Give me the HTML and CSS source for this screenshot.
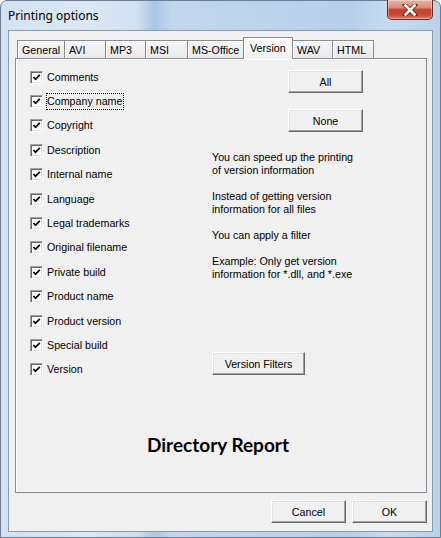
FILE: index.html
```html
<!DOCTYPE html>
<html>
<head>
<meta charset="utf-8">
<link rel="stylesheet" href="styles.css">
</head>
<body>
<div class="window">
  <div class="titlebar">
    <span class="title">Printing options</span>
    <span class="close">
      <svg width="16" height="12" viewBox="0 0 16 12">
        <path d="M3 1 L13 11 M13 1 L3 11" stroke="#5a2018" stroke-width="4.2" stroke-linecap="square"/>
        <path d="M3.5 1.5 L12.5 10.5 M12.5 1.5 L3.5 10.5" stroke="#ffffff" stroke-width="2.6" stroke-linecap="square"/>
      </svg>
    </span>
  </div>
  <div class="client">
    <div class="tabs">
      <span class="tab" style="width:48px">General</span>
      <span class="tab" style="width:42px">AVI</span>
      <span class="tab" style="width:41px">MP3</span>
      <span class="tab" style="width:43px">MSI</span>
      <span class="tab" style="width:57px">MS-Office</span>
      <span class="tab active" style="width:50px">Version</span>
      <span class="tab" style="width:41px">WAV</span>
      <span class="tab" style="width:42px">HTML</span>
    </div>
    <div class="panel">
      <div class="columns">
        <div class="checks">
          <div class="row"><span class="cb"><svg viewBox="0 0 11 11"><path d="M2.5 5 L4.5 7.3 L8.8 2.8" /></svg></span><span class="lbl">Comments</span></div>
          <div class="row"><span class="cb"><svg viewBox="0 0 11 11"><path d="M2.5 5 L4.5 7.3 L8.8 2.8" /></svg></span><span class="lbl focus">Company name</span></div>
          <div class="row"><span class="cb"><svg viewBox="0 0 11 11"><path d="M2.5 5 L4.5 7.3 L8.8 2.8" /></svg></span><span class="lbl">Copyright</span></div>
          <div class="row"><span class="cb"><svg viewBox="0 0 11 11"><path d="M2.5 5 L4.5 7.3 L8.8 2.8" /></svg></span><span class="lbl">Description</span></div>
          <div class="row"><span class="cb"><svg viewBox="0 0 11 11"><path d="M2.5 5 L4.5 7.3 L8.8 2.8" /></svg></span><span class="lbl">Internal name</span></div>
          <div class="row"><span class="cb"><svg viewBox="0 0 11 11"><path d="M2.5 5 L4.5 7.3 L8.8 2.8" /></svg></span><span class="lbl">Language</span></div>
          <div class="row"><span class="cb"><svg viewBox="0 0 11 11"><path d="M2.5 5 L4.5 7.3 L8.8 2.8" /></svg></span><span class="lbl">Legal trademarks</span></div>
          <div class="row"><span class="cb"><svg viewBox="0 0 11 11"><path d="M2.5 5 L4.5 7.3 L8.8 2.8" /></svg></span><span class="lbl">Original filename</span></div>
          <div class="row"><span class="cb"><svg viewBox="0 0 11 11"><path d="M2.5 5 L4.5 7.3 L8.8 2.8" /></svg></span><span class="lbl">Private build</span></div>
          <div class="row"><span class="cb"><svg viewBox="0 0 11 11"><path d="M2.5 5 L4.5 7.3 L8.8 2.8" /></svg></span><span class="lbl">Product name</span></div>
          <div class="row"><span class="cb"><svg viewBox="0 0 11 11"><path d="M2.5 5 L4.5 7.3 L8.8 2.8" /></svg></span><span class="lbl">Product version</span></div>
          <div class="row"><span class="cb"><svg viewBox="0 0 11 11"><path d="M2.5 5 L4.5 7.3 L8.8 2.8" /></svg></span><span class="lbl">Special build</span></div>
          <div class="row"><span class="cb"><svg viewBox="0 0 11 11"><path d="M2.5 5 L4.5 7.3 L8.8 2.8" /></svg></span><span class="lbl">Version</span></div>
        </div>
        <div class="side">
          <button class="btn btn-all">All</button>
          <button class="btn btn-none">None</button>
          <div class="info">
            <p>You can speed up the printing<br>of version information</p>
            <p>Instead of getting version<br>information for all files</p>
            <p>You can apply a filter</p>
            <p>Example: Only get version<br>information for *.dll, and *.exe</p>
          </div>
          <button class="btn btn-filters">Version Filters</button>
        </div>
      </div>
      <div class="report">Directory Report</div>
    </div>
    <div class="footer">
      <button class="btn btn-foot">Cancel</button>
      <button class="btn btn-foot">OK</button>
    </div>
  </div>
</div>
</body>
</html>
```
FILE: styles.css
```css
html, body {
  margin: 0;
  padding: 0;
  width: 441px;
  height: 538px;
  overflow: hidden;
  background: #ffffff;
}
.window {
  box-sizing: border-box;
  width: 441px;
  height: 538px;
  border: 1px solid #6c7d91;
  border-radius: 7px 7px 0 0;
  background: linear-gradient(to right, #d3e2f2 0%, #dbe8f5 20%, #cfe0f1 31%, #a9c6e6 35%, #c2d7ee 39%, #bcd3ec 60%, #b6cfea 80%, #c7dbef 88%, #b9d1ea 100%);
  display: flex;
  flex-direction: column;
  font-family: "Liberation Sans", Arial, sans-serif;
}
.titlebar {
  height: 29px;
  display: flex;
  justify-content: space-between;
  align-items: flex-start;
  padding: 0 7px 0 7px;
}
.title {
  font-family: "Noto Sans", "Liberation Sans", sans-serif;
  font-size: 12px;
  color: #000;
  margin-top: 6px;
}
.close {
  box-sizing: border-box;
  width: 46px;
  height: 20px;
  margin-top: -1px;
  border: 1px solid #6b2a22;
  border-top: none;
  border-radius: 0 0 5px 5px;
  background: linear-gradient(#eab2a4 0%, #dc8a7a 40%, #c74532 50%, #c9442f 75%, #de7d63 100%);
  box-shadow: inset 0 0 0 1px rgba(255,255,255,0.35);
  display: flex;
  align-items: center;
  justify-content: center;
}
.close svg { display: block; }
.client {
  box-sizing: border-box;
  margin: 0 7px 0 7px;
  height: 502px;
  border: 1px solid #8a9bb0;
  background: #f0f0f0;
  display: flex;
  flex-direction: column;
  padding: 6px 5px 0 6px;
}
.tabs {
  display: flex;
  align-items: flex-end;
  height: 21px;
  padding-left: 2px;
  position: relative;
  z-index: 2;
}
.tab {
  box-sizing: border-box;
  height: 18px;
  border: 1px solid #898c95;
  border-bottom: none;
  margin-left: -1px;
  background: linear-gradient(#f6f6f6, #e9e9e9);
  box-shadow: inset 1px 1px 0 #ffffff;
  font-size: 10.7px;
  color: #000;
  padding: 3px 0 0 4px;
  white-space: nowrap;
  overflow: hidden;
}
.tab:first-child { margin-left: 0; }
.tab.active {
  height: 22px;
  margin-bottom: -1px;
  background: linear-gradient(#fdfdfd, #f0f0f0);
  padding-top: 4px;
  padding-left: 6px;
  position: relative;
  z-index: 3;
}
.panel {
  box-sizing: border-box;
  height: 435px;
  border: 1px solid #898c95;
  box-shadow: inset 1px 1px 0 #ffffff;
  background: #f0f0f0;
  display: flex;
  flex-direction: column;
  padding: 6px 0 0 14px;
}
.columns {
  display: flex;
}
.checks {
  width: 182px;
  display: flex;
  flex-direction: column;
}
.row {
  height: 24.4px;
  display: flex;
  align-items: center;
}
.cb {
  box-sizing: border-box;
  width: 13px;
  height: 13px;
  background: #fff;
  border: 1px solid;
  border-color: #a0a0a0 #ffffff #ffffff #a0a0a0;
  box-shadow: inset 1px 1px 0 #696969, inset -1px -1px 0 #e3e3e3;
  display: flex;
  align-items: center;
  justify-content: center;
  margin-right: 3px;
}
.cb svg {
  width: 11px;
  height: 11px;
  display: block;
}
.cb path {
  fill: none;
  stroke: #000;
  stroke-width: 1.7;
}
.lbl {
  font-size: 10.7px;
  color: #000;
  padding: 1px 1px 2px 0;
  border: 1px dotted transparent;
  line-height: 12px;
}
.lbl.focus {
  border-color: #000;
}
.side {
  display: flex;
  flex-direction: column;
  align-items: flex-start;
  padding-top: 5px;
}
.btn {
  box-sizing: border-box;
  font-family: "Liberation Sans", Arial, sans-serif;
  font-size: 10.7px;
  color: #000;
  background: #f0f0f0;
  border: 1px solid;
  border-color: #ffffff #696969 #696969 #ffffff;
  box-shadow: inset -1px -1px 0 #a0a0a0, inset 1px 1px 0 #e3e3e3;
  padding: 0;
  margin: 0;
  display: flex;
  align-items: center;
  justify-content: center;
}
.btn-all {
  width: 75px;
  height: 23px;
  margin-left: 76px;
}
.btn-none {
  width: 75px;
  height: 23px;
  margin-left: 76px;
  margin-top: 16px;
}
.info {
  margin-top: 19px;
  font-size: 10.7px;
  line-height: 13px;
  color: #000;
}
.info p {
  margin: 0 0 13px 0;
}
.info p:last-child { margin-bottom: 0; }
.btn-filters {
  width: 93px;
  height: 23px;
  margin-top: 71px;
}
.report {
  margin-top: 51px;
  padding-right: 20px;
  text-align: center;
  font-family: Lato, "Open Sans", sans-serif;
  font-weight: bold;
  font-size: 19px;
  color: #000;
}
.footer {
  display: flex;
  justify-content: flex-end;
  gap: 6px;
  margin-top: 7px;
}
.btn-foot {
  width: 75px;
  height: 23px;
}
```
